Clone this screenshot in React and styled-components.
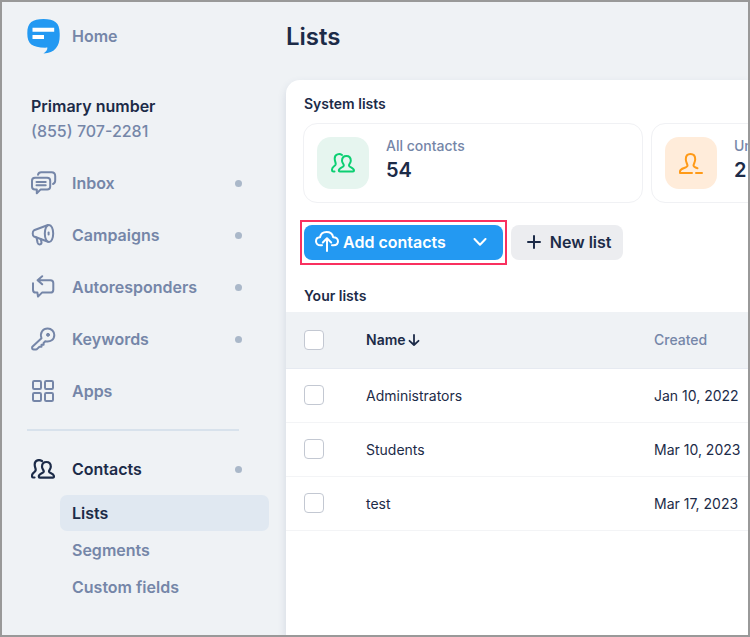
import React, { useState } from "react";
import styled, { createGlobalStyle, ThemeProvider } from "styled-components";

const theme = {
  colors: {
    bg: "#eff2f5",
    text: "#1c2b48",
    helper: "#7586a8",
    blue: "#2399f2",
    active: "#e0e8f1",
    border: "#f3f4f6",
    dot: "#aab8c9",
    highlight: "#f9305f",
  },
};

const channels = [
  { name: "Inbox", icon: InboxIcon, dot: true },
  { name: "Campaigns", icon: CampaignIcon, dot: true },
  { name: "Autoresponders", icon: ReplyIcon, dot: true },
  { name: "Keywords", icon: KeyIcon, dot: true },
  { name: "Apps", icon: AppsIcon, dot: false },
];

const subPages = ["Lists", "Segments", "Custom fields"];

const rows = [
  { name: "Administrators", created: "Jan 10, 2022" },
  { name: "Students", created: "Mar 10, 2023" },
  { name: "test", created: "Mar 17, 2023" },
];

function Icon({ width = 26, height = 24, stroke = 2, children }) {
  return (
    <svg
      width={width}
      height={height}
      viewBox={`0 0 ${width} ${height}`}
      fill="none"
      stroke="currentColor"
      strokeWidth={stroke}
      strokeLinecap="round"
      strokeLinejoin="round"
      aria-hidden="true"
    >
      {children}
    </svg>
  );
}

function Logo() {
  return (
    <svg width="33" height="36" viewBox="0 0 33 36" aria-hidden="true">
      <path
        fill="#2399f2"
        d="M16.500 1C27.500 1 32.700 4.500 32.700 15.500V18C32.700 28 28 35 16.500 35.500C19.200 33.800 20.400 32 20.400 29.600C5.500 30 .3 26.500 .3 15.300C.3 4.500 5.500 1 16.500 1Z"
      />
      <path fill="#fff" d="M5.500 9.800H27.200V13.800H5.500ZM5.500 17H17V21H5.500Z" />
    </svg>
  );
}

function InboxIcon() {
  return (
    <Icon>
      <path d="M4 6.700H16.200Q19.200 6.700 19.200 9.700V15.600Q19.200 18.600 16.200 18.600H9.500L5.800 22.300V18.600H4Q1 18.600 1 15.600V9.700Q1 6.700 4 6.700Z" />
      <path d="M5.500 11H14.700M5.500 14.200H14.700" />
      <path d="M7 3.700Q7.600 1.300 10.200 1.300H20.500Q24.200 1.300 24.200 5V9.300Q24.200 12.300 22 13" />
    </Icon>
  );
}

function CampaignIcon() {
  return (
    <Icon>
      <ellipse cx="18" cy="10.500" rx="4.200" ry="8.600" />
      <path d="M17 2L3 7.300C1.300 8.200 1.300 12.700 3 13.500L17 18.800" />
      <path d="M5.500 14.500L6.600 19.700Q7.300 21.800 9.200 21.300Q10.900 20.700 10.400 18.700L9.700 16" />
      <path d="M17.600 9.500V11.500" />
    </Icon>
  );
}

function ReplyIcon() {
  return (
    <Icon>
      <path d="M11.200 1.200L6.600 5.200L11.200 9.300M7 5.200H19.400Q22.300 5.200 22.300 8.100V14.700Q22.300 17.600 19.400 17.600H11L7 21.600L6.400 17.600H4.900Q2 17.600 2 14.700V8.200" />
    </Icon>
  );
}

function KeyIcon() {
  return (
    <Icon>
      <path d="M10.500 11.300C8.500 5.500 12 1.500 16.700 1.500C20.600 1.500 23.300 4.500 23.300 8C23.300 12.500 19.500 15.500 14.300 14.300L12.600 16V17.700H10.500V19.700H8.500L6.200 21.900Q5.800 22.400 5 22.400H2.700Q1.100 22.400 1.100 20.800V20.600Q1.100 20 1.600 19.500Z" />
      <circle cx="17" cy="7.800" r="1.500" fill="currentColor" strokeWidth="1" />
    </Icon>
  );
}

function AppsIcon() {
  return (
    <Icon>
      <rect x="2" y="2" width="8" height="8" rx="1.200" />
      <rect x="14" y="2" width="8" height="8" rx="1.200" />
      <rect x="2" y="14" width="8" height="8" rx="1.200" />
      <rect x="14" y="14" width="8" height="8" rx="1.200" />
    </Icon>
  );
}

function PeopleIcon({ stroke = 2.2 }) {
  return (
    <Icon width={24} height={20} stroke={stroke}>
      <path d="M11 2C8.500.2 3.700.9 3.700 5.500C3.700 8.500 4.900 9.300 4.700 11.200C4.400 13.500 1 13.300 1 16.600V17.200Q1 18.500 2.500 18.500H3.500" />
      <path d="M15.400 3C12.500 3 11 5 11 7.800C11 10 12.800 10.900 12.800 12.400C12.800 14.400 7.800 14.300 7.800 17.500Q7.800 18.600 8.800 18.600H22Q23 18.600 23 17.500C23 14.300 18 14.400 18 12.400C18 10.900 19.800 10 19.800 7.800C19.800 5 18.300 3 15.400 3Z" />
    </Icon>
  );
}

function UnsubscribedIcon() {
  return (
    <Icon width={24} height={21}>
      <path d="M13 20H1V18.500C1 14.500 8.500 15.500 8.500 12.600C8.500 11 6.800 9.500 6.800 6.300C6.800 3 8.800 1 11.500 1S16.200 3 16.200 6.300C16.200 9.500 14.500 11 14.500 12.600C14.500 14.200 16.500 14.700 18.500 15.200" />
      <path d="M17 20H23" />
    </Icon>
  );
}

function UploadIcon() {
  return (
    <Icon width={24} height={21}>
      <path d="M7 14.300H5.500C3 14.300 1 12.600 1 10.200C1 7.900 2.800 6.300 5 6.200C5.600 3.100 8.200 1 11.500 1C15 1 17.500 3 18.200 6.200C21 6.200 23 7.900 23 10.300C23 12.600 21.200 14.300 18.500 14.300H17" />
      <path d="M12 20V7.500M7.800 11.500L12 7.300L16.200 11.500" />
    </Icon>
  );
}

function Sidebar() {
  return (
    <Side>
      <HomeLink href="#home">
        <Logo />
        Home
      </HomeLink>
      <Account>
        <strong>Primary number</strong>
        <span>(855) 707-2281</span>
      </Account>
      <nav>
        {channels.map(({ name, icon: NavIcon, dot }) => (
          <NavLink href={`#${name.toLowerCase()}`} key={name}>
            <NavIcon />
            {name}
            {dot && <Dot />}
          </NavLink>
        ))}
        <Divider />
        <NavLink href="#contacts" $active>
          <PeopleIcon />
          Contacts
          <Dot />
        </NavLink>
        <SubNav>
          {subPages.map((page) => (
            <SubLink href={`#${page}`} key={page} $active={page === "Lists"}>
              {page}
            </SubLink>
          ))}
        </SubNav>
      </nav>
    </Side>
  );
}

function ListsTable() {
  const [selected, setSelected] = useState([]);
  const toggle = (name) =>
    setSelected(
      selected.includes(name)
        ? selected.filter((item) => item !== name)
        : [...selected, name]
    );
  const all = selected.length === rows.length;

  return (
    <Table>
      <thead>
        <tr>
          <CheckHead>
            <Checkbox
              type="checkbox"
              aria-label="Select all lists"
              checked={all}
              onChange={() => setSelected(all ? [] : rows.map((r) => r.name))}
            />
          </CheckHead>
          <th>
            <SortButton type="button">
              Name
              <Icon width={12} height={12} stroke={1.8}>
                <path d="M6 1V11M1.500 6.800L6 11L10.500 6.800" />
              </Icon>
            </SortButton>
          </th>
          <DateHead>Created</DateHead>
        </tr>
      </thead>
      <tbody>
        {rows.map((row) => (
          <tr key={row.name}>
            <td>
              <Checkbox
                type="checkbox"
                aria-label={`Select ${row.name}`}
                checked={selected.includes(row.name)}
                onChange={() => toggle(row.name)}
              />
            </td>
            <td>{row.name}</td>
            <td>{row.created}</td>
          </tr>
        ))}
      </tbody>
    </Table>
  );
}

function App() {
  return (
    <ThemeProvider theme={theme}>
      <GlobalStyle />
      <Page>
        <Sidebar />
        <Main>
          <h1>Lists</h1>
          <Panel>
            <SectionTitle>System lists</SectionTitle>
            <Cards>
              <Card>
                <Tile $bg="#e6f5ef" $color="#0ccf72">
                  <PeopleIcon stroke={2} />
                </Tile>
                <Stat>
                  <span>All contacts</span>
                  <strong>54</strong>
                </Stat>
              </Card>
              <Card>
                <Tile $bg="#ffecda" $color="#ff9a17">
                  <UnsubscribedIcon />
                </Tile>
                <Stat>
                  <span>Unsubscribed</span>
                  <strong>2</strong>
                </Stat>
              </Card>
            </Cards>
            <Toolbar>
              <Highlight>
                <Button type="button" $primary>
                  <UploadIcon />
                  Add contacts
                  <Chevron>
                    <Icon width={14} height={8}>
                      <path d="M1.500 1L7 6.800L12.500 1" />
                    </Icon>
                  </Chevron>
                </Button>
              </Highlight>
              <Button type="button">
                <Icon width={14} height={14}>
                  <path d="M7 1V13M1 7H13" />
                </Icon>
                New list
              </Button>
            </Toolbar>
            <SectionTitle>Your lists</SectionTitle>
            <ListsTable />
          </Panel>
        </Main>
      </Page>
    </ThemeProvider>
  );
}

const GlobalStyle = createGlobalStyle`
  * {
    box-sizing: border-box;
  }
  body {
    margin: 0;
    font-family: Inter, "Liberation Sans", sans-serif;
    color: ${theme.colors.text};
  }
  a {
    text-decoration: none;
  }
  button {
    font-family: inherit;
    cursor: pointer;
  }
`;
const Page = styled.div`
  display: flex;
  min-height: 100vh;
  border: 2px solid #999;
  background-color: ${({ theme }) => theme.colors.bg};
  overflow: hidden;
`;
const Side = styled.aside`
  flex: 0 0 284px;
  padding: 16px 17px 24px 25px;
`;
const HomeLink = styled.a`
  display: flex;
  align-items: center;
  gap: 12px;
  height: 36px;
  font-size: 16px;
  font-weight: 600;
  color: ${({ theme }) => theme.colors.helper};
`;
const Account = styled.div`
  display: flex;
  flex-direction: column;
  padding: 40px 4px 13px;
  font-size: 16px;
  line-height: 25px;
  strong {
    font-weight: 600;
  }
  span {
    font-weight: 500;
    color: ${({ theme }) => theme.colors.helper};
  }
`;
const NavLink = styled.a`
  display: flex;
  align-items: center;
  height: 52px;
  padding: 0 27px 0 4px;
  font-size: 16px;
  font-weight: 600;
  color: ${({ theme, $active }) =>
    $active ? theme.colors.text : theme.colors.helper};
  svg {
    flex: none;
    margin-right: ${({ $active }) => ($active ? 17 : 15)}px;
  }
`;
const Dot = styled.span`
  width: 7px;
  height: 7px;
  margin-left: auto;
  border-radius: 50%;
  background-color: ${({ theme }) => theme.colors.dot};
`;
const Divider = styled.hr`
  height: 2px;
  margin: 12px 30px 12px 0;
  border: none;
  background-color: #d8e2ec;
`;
const SubNav = styled.div`
  display: flex;
  flex-direction: column;
  gap: 1px;
  padding-left: 33px;
`;
const SubLink = styled.a`
  padding: 0 12px;
  border-radius: 7px;
  font-size: 16px;
  line-height: 36px;
  font-weight: 600;
  color: ${({ theme, $active }) =>
    $active ? theme.colors.text : theme.colors.helper};
  background-color: ${({ theme, $active }) =>
    $active ? theme.colors.active : "transparent"};
`;
const Main = styled.main`
  display: flex;
  flex: 1;
  flex-direction: column;
  min-width: 0;
  h1 {
    margin: 0;
    padding: 18px 0 26px;
    font-size: 24px;
    line-height: 34px;
    font-weight: 600;
  }
`;
const Panel = styled.section`
  flex: 1;
  padding-top: 14px;
  border-top-left-radius: 14px;
  background-color: #fff;
  box-shadow: 0 4px 8px rgba(60, 90, 130, 0.16);
`;
const SectionTitle = styled.h2`
  margin: 0;
  padding-left: 18px;
  font-size: 14px;
  line-height: 20px;
  font-weight: 600;
`;
const Cards = styled.div`
  display: flex;
  gap: 8px;
  padding: 9px 0 17px 17px;
`;
const Card = styled.div`
  display: flex;
  flex: 0 0 340px;
  gap: 17px;
  height: 80px;
  padding: 13px;
  border: 1px solid #f0f1f4;
  border-radius: 14px;
`;
const Tile = styled.span`
  display: flex;
  flex: none;
  align-items: center;
  justify-content: center;
  width: 52px;
  height: 52px;
  border-radius: 14px;
  color: ${({ $color }) => $color};
  background-color: ${({ $bg }) => $bg};
`;
const Stat = styled.div`
  display: flex;
  flex-direction: column;
  line-height: 24px;
  margin-top: -3px;
  span {
    font-size: 14px;
    font-weight: 500;
    color: ${({ theme }) => theme.colors.helper};
  }
  strong {
    font-size: 20px;
    font-weight: 600;
  }
`;
const Toolbar = styled.div`
  display: flex;
  align-items: center;
  gap: 4px;
  padding: 0 0 21px 14px;
`;
const Highlight = styled.div`
  padding: 3px 2px;
  border: 2px solid ${({ theme }) => theme.colors.highlight};
`;
const Button = styled.button`
  display: flex;
  align-items: center;
  gap: ${({ $primary }) => ($primary ? 4 : 9)}px;
  height: 35px;
  padding: ${({ $primary }) => ($primary ? "0 16px 2px 11px" : "0 12px 1px 16px")};
  border: none;
  border-radius: 8px;
  font-size: 16px;
  font-weight: 600;
  white-space: nowrap;
  color: ${({ theme, $primary }) => ($primary ? "#fff" : theme.colors.text)};
  background-color: ${({ theme, $primary }) =>
    $primary ? theme.colors.blue : "#ecedf0"};
`;
const Chevron = styled.span`
  display: flex;
  margin-left: 23px;
`;
const Table = styled.table`
  width: 100%;
  margin-top: 6px;
  border-collapse: collapse;
  font-size: 14px;
  white-space: nowrap;
  th,
  td {
    height: 54px;
    padding: 0;
    text-align: left;
    border-bottom: 1px solid ${({ theme }) => theme.colors.border};
  }
  th {
    height: 56px;
    background-color: ${({ theme }) => theme.colors.bg};
    border-color: #e6eaf1;
  }
  th:first-child,
  td:first-child {
    padding-left: 18px;
  }
`;
const CheckHead = styled.th`
  width: 80px;
`;
const DateHead = styled.th`
  width: 94px;
  font-weight: 500;
  color: ${({ theme }) => theme.colors.helper};
`;
const SortButton = styled.button`
  display: flex;
  align-items: center;
  gap: 2px;
  padding: 0;
  border: none;
  font-size: 14px;
  font-weight: 600;
  color: inherit;
  background: none;
`;
const Checkbox = styled.input`
  display: block;
  appearance: none;
  width: 20px;
  height: 20px;
  margin: 0;
  border: 1px solid #c3c8d2;
  border-radius: 4px;
  background-color: #fff;
  &:checked {
    border-color: ${({ theme }) => theme.colors.blue};
    background-color: ${({ theme }) => theme.colors.blue};
  }
`;

export default App;
